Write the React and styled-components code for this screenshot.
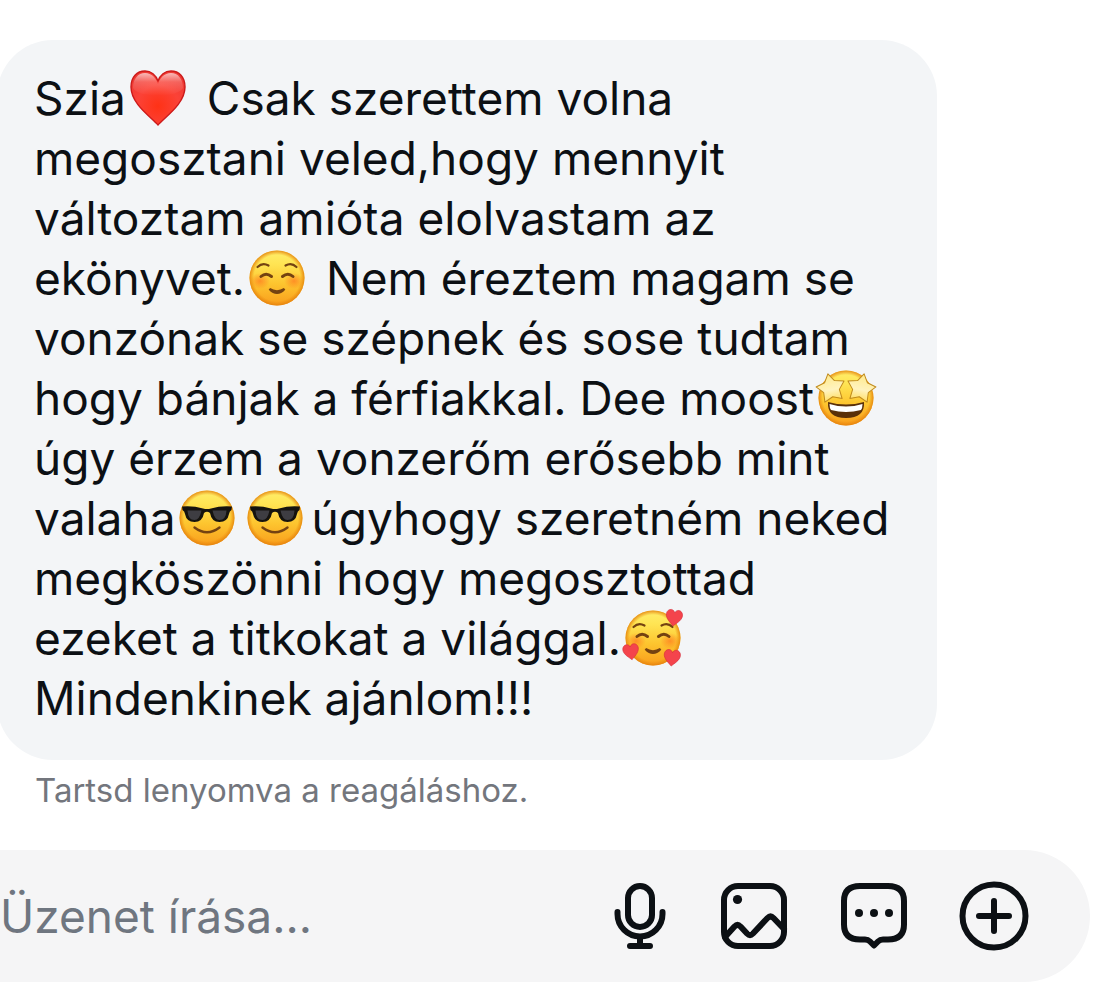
import React, { useId, useState } from 'react';
import { styled, createGlobalStyle } from 'styled-components';

const HEART = 'M0 28 C-7 20 -28 6 -28 -11 C-28 -21 -21 -28 -13 -28 C-7 -28 -2 -24 0 -18 C2 -24 7 -28 13 -28 C21 -28 28 -21 28 -11 C28 6 7 20 0 28 Z';
const STAR =
  'M0 -15 L5 -7 L14.3 -4.6 L8 2.6 L8.8 12.1 L0 8.4 L-8.8 12.1 L-8 2.6 L-14.3 -4.6 L-5 -7 Z';

const Face = ({ label, children, blush }) => {
  const id = useId();
  return (
    <S.Emoji viewBox="0 0 60 60" role="img" aria-label={label}>
      <defs>
        <linearGradient id={`${id}f`} x1="0" y1="0" x2="0" y2="1">
          <stop offset="0" stopColor="#ffee6a" />
          <stop offset="0.25" stopColor="#ffe453" />
          <stop offset="0.6" stopColor="#fdc52f" />
          <stop offset="1" stopColor="#f99d1c" />
        </linearGradient>
        <radialGradient id={`${id}e`}>
          <stop offset="0.84" stopColor="#e8860c" stopOpacity="0" />
          <stop offset="1" stopColor="#e3800c" stopOpacity="0.85" />
        </radialGradient>
        <radialGradient id={`${id}b`}>
          <stop offset="0" stopColor="#ff6a1c" stopOpacity="0.6" />
          <stop offset="1" stopColor="#ff6a1c" stopOpacity="0" />
        </radialGradient>
      </defs>
      <circle cx="30" cy="30" r="27.5" fill={`url(#${id}f)`} />
      {blush && (
        <>
          <ellipse cx="13" cy="33" rx="10" ry="8" fill={`url(#${id}b)`} />
          <ellipse cx="47" cy="33" rx="10" ry="8" fill={`url(#${id}b)`} />
        </>
      )}
      <circle cx="30" cy="30" r="27.5" fill={`url(#${id}e)`} />
      {children}
    </S.Emoji>
  );
};

const HeartEmoji = () => {
  const id = useId();
  return (
    <S.Emoji viewBox="0 0 60 60" role="img" aria-label="❤️">
      <defs>
        <radialGradient id={id} cx="0.5" cy="0.65" r="0.65">
          <stop offset="0" stopColor="#ff3216" />
          <stop offset="0.6" stopColor="#fb4237" />
          <stop offset="1" stopColor="#ee3a34" />
        </radialGradient>
        <linearGradient id={`${id}s`} x1="0" y1="0" x2="0" y2="1">
          <stop offset="0" stopColor="#fff" stopOpacity="0.65" />
          <stop offset="0.4" stopColor="#fff" stopOpacity="0.2" />
          <stop offset="1" stopColor="#fff" stopOpacity="0" />
        </linearGradient>
      </defs>
      <g transform="translate(30 30)">
        <path
          d="M0 27 C-7 19 -27 6 -27 -11 C-27 -21 -21 -27 -13 -27 C-7 -27 -2 -23 0 -17 C2 -23 7 -27 13 -27 C21 -27 27 -21 27 -11 C27 6 7 19 0 27 Z"
          fill={`url(#${id})`}
          stroke="#cc1a1a"
          strokeWidth="1.4"
          strokeLinejoin="round"
        />
        <path
          d="M-25 -10 C-25 -19 -20 -25 -13 -25 C-6 -25 -2 -20 0 -14 C2 -20 6 -25 13 -25 C20 -25 25 -19 25 -10 C20 0 -20 0 -25 -10 Z"
          fill={`url(#${id}s)`}
        />
      </g>
    </S.Emoji>
  );
};

const SmileLines = () => (
  <g fill="none" stroke="#744211" strokeWidth="2.2" strokeLinecap="round">
    <path d="M10.5 19 Q15.5 14 21.5 17.5" />
    <path d="M38.5 17.5 Q44.5 14 49.5 19" />
    <path d="M14 28.5 Q19 24 24.5 28.5" strokeWidth="3" />
    <path d="M35.5 28.5 Q41 24 46 28.5" strokeWidth="3" />
    <path d="M22.5 41 Q30 49 37.5 41 Q30 45.5 22.5 41 Z" fill="#744211" />
  </g>
);

const BlushEmoji = () => (
  <Face label="☺️" blush>
    <SmileLines />
  </Face>
);

const LoveEmoji = () => (
  <Face label="🥰" blush>
    <SmileLines />
    <g fill="#f4444c" stroke="#d42a38" strokeWidth="2">
      <path d={HEART} transform="translate(51 10) rotate(8) scale(0.29)" />
      <path d={HEART} transform="translate(8 44) rotate(-8) scale(0.28)" />
      <path d={HEART} transform="translate(49 50) rotate(6) scale(0.29)" />
    </g>
  </Face>
);

const CoolEmoji = () => (
  <Face label="😎">
    <path
      d="M5 18.5 Q16 17.5 26 20.5 Q30 21.5 34 20.5 Q44 17.5 55 18.5 L54.5 22 Q52.5 23 52 26 Q50.5 34 42.5 34 Q34.5 34 33 25 Q30 22.5 27 25 Q25.5 34 17.5 34 Q9.5 34 8 26 Q7.5 23 5.5 22 Z"
      fill="#15130f"
    />
    <path
      d="M10.5 22.5 L24.5 22.5 Q22.5 32 17.5 32 Q11 32 10.5 22.5 Z M35.5 22.5 L49.5 22.5 Q49 32 42.5 32 Q37.5 32 35.5 22.5 Z"
      fill="#3e3d42"
    />
    <path d="M17.5 39.5 Q30 49 42.5 39.5" fill="none" stroke="#744211" strokeWidth="2.4" strokeLinecap="round" />
  </Face>
);

const StarEmoji = () => {
  const id = useId();
  return (
    <Face label="🤩">
      <defs>
        <linearGradient id={id} x1="0" y1="0" x2="0" y2="1">
          <stop offset="0" stopColor="#ffe98a" />
          <stop offset="0.6" stopColor="#fff3bf" />
          <stop offset="1" stopColor="#ffdf68" />
        </linearGradient>
      </defs>
      <path d="M12 34 Q30 39 48 34 Q49 50 30 50 Q11 50 12 34 Z" fill="#5a3009" />
      <path d="M13.5 36 Q30 41 46.5 36 Q46.5 40 45 42 Q30 46 15 42 Q13.5 40 13.5 36 Z" fill="#fff" />
      <g fill={`url(#${id})`} stroke="#c08a1c" strokeWidth="1" strokeLinejoin="round">
        <path d={STAR} transform="translate(15 20.5) rotate(-12)" />
        <path d={STAR} transform="translate(45 20.5) rotate(12)" />
      </g>
    </Face>
  );
};

const MicIcon = () => (
  <S.Icon width="60" height="72" viewBox="0 0 60 72">
    <rect x="18" y="6" width="24" height="41" rx="12" />
    <path d="M7.5 32 V34 A22.5 22.5 0 0 0 52.5 34 V32 M30 57 V66 M20 66 H40" />
  </S.Icon>
);

const ImageIcon = () => (
  <S.Icon width="72" height="72" viewBox="0 0 72 72">
    <rect x="6" y="6" width="60" height="60" rx="14" />
    <circle cx="19.5" cy="19.5" r="4.6" fill="currentColor" stroke="none" />
    <path d="M7 57 L16.5 46.5 Q19.5 43.5 22.5 46.5 L29 53.5 Q32 56.5 35 53.5 L49.5 38 Q52.5 35 55.5 38 L66 49" />
  </S.Icon>
);

const ChatIcon = () => (
  <S.Icon width="72" height="72" viewBox="0 0 72 72">
    <path d="M22 6 H50 Q66 6 66 21 V44.5 Q66 59.5 50 59.5 H45 Q42 59.5 40 61.5 L36 65.5 L32 61.5 Q30 59.5 27 59.5 H22 Q6 59.5 6 44.5 V21 Q6 6 22 6 Z" />
    <g fill="currentColor" stroke="none">
      <circle cx="21" cy="33" r="4" />
      <circle cx="36" cy="33" r="4" />
      <circle cx="51" cy="33" r="4" />
    </g>
  </S.Icon>
);

const PlusIcon = () => (
  <S.Icon width="72" height="72" viewBox="0 0 72 72">
    <circle cx="36" cy="36" r="31.5" />
    <path d="M21 36 H51 M36 21 V51" />
  </S.Icon>
);

const App = () => {
  const [message, setMessage] = useState('');

  return (
    <>
      <GlobalStyle />
      <S.Chat>
        <S.Bubble>
          Szia
          <HeartEmoji /> Csak szerettem volna
          <br />
          megosztani veled,hogy mennyit
          <br />
          változtam amióta elolvastam az
          <br />
          ekönyvet.
          <BlushEmoji /> Nem éreztem magam se
          <br />
          vonzónak se szépnek és sose tudtam
          <br />
          hogy bánjak a férfiakkal. Dee moost
          <StarEmoji />
          <br />
          úgy érzem a vonzerőm erősebb mint
          <br />
          valaha
          <CoolEmoji />
          <CoolEmoji />
          úgyhogy szeretném neked
          <br />
          megköszönni hogy megosztottad
          <br />
          ezeket a titkokat a világgal.
          <LoveEmoji />
          <br />
          Mindenkinek ajánlom!!!
        </S.Bubble>
        <S.Hint>Tartsd lenyomva a reagáláshoz.</S.Hint>
        <S.Composer onSubmit={(e) => e.preventDefault()}>
          <S.MessageInput
            type="text"
            aria-label="Üzenet írása"
            placeholder="Üzenet írása..."
            value={message}
            onChange={(e) => setMessage(e.target.value)}
          />
          <S.Actions>
            <S.IconButton type="button" aria-label="Hangüzenet">
              <MicIcon />
            </S.IconButton>
            <S.IconButton type="button" aria-label="Kép">
              <ImageIcon />
            </S.IconButton>
            <S.IconButton type="button" aria-label="Mentett válaszok">
              <ChatIcon />
            </S.IconButton>
            <S.IconButton type="button" aria-label="Továbbiak">
              <PlusIcon />
            </S.IconButton>
          </S.Actions>
        </S.Composer>
      </S.Chat>
    </>
  );
};

export default App;

const GlobalStyle = createGlobalStyle`
  * {
    box-sizing: border-box;
  }

  body {
    margin: 0;
    background-color: #fff;
    color: #0c1014;
    font-family: Inter, 'Liberation Sans', sans-serif;
    font-variant-ligatures: none;
  }
`;

const S = {
  Chat: styled.main`
    padding: 40px 24px 24px 0;
    overflow: hidden;
  `,

  Bubble: styled.p`
    margin: 0 153px 0 -3px;
    padding: 28px 37px 32px;
    border-radius: 56px;
    background-color: #f3f5f7;
    font-size: 46px;
    line-height: 60px;
    white-space: nowrap;
  `,

  Emoji: styled.svg`
    width: 60px;
    height: 60px;
    margin: -4px 6px -4px 2px;
    vertical-align: -9px;
    overflow: visible;
  `,

  Hint: styled.p`
    margin: 0;
    padding: 10px 35px 40px;
    color: #73767d;
    font-size: 33px;
    line-height: 40px;
  `,

  Composer: styled.form`
    display: flex;
    align-items: center;
    height: 132px;
    padding-right: 60px;
    border-radius: 0 66px 66px 0;
    background-color: #f5f5f6;
  `,

  MessageInput: styled.input`
    flex: 1;
    min-width: 0;
    height: 100%;
    padding: 0;
    border: none;
    outline: none;
    background: transparent;
    color: inherit;
    font-family: inherit;
    font-size: 46px;

    &::placeholder {
      color: #6f7680;
      opacity: 1;
    }
  `,

  Actions: styled.div`
    display: flex;
    gap: 48px;
  `,

  IconButton: styled.button`
    display: flex;
    padding: 0;
    border: none;
    background: none;
    color: #0c1014;
    cursor: pointer;
  `,

  Icon: styled.svg`
    fill: none;
    stroke: currentColor;
    stroke-width: 6px;
    stroke-linecap: round;
    stroke-linejoin: round;
  `
};
